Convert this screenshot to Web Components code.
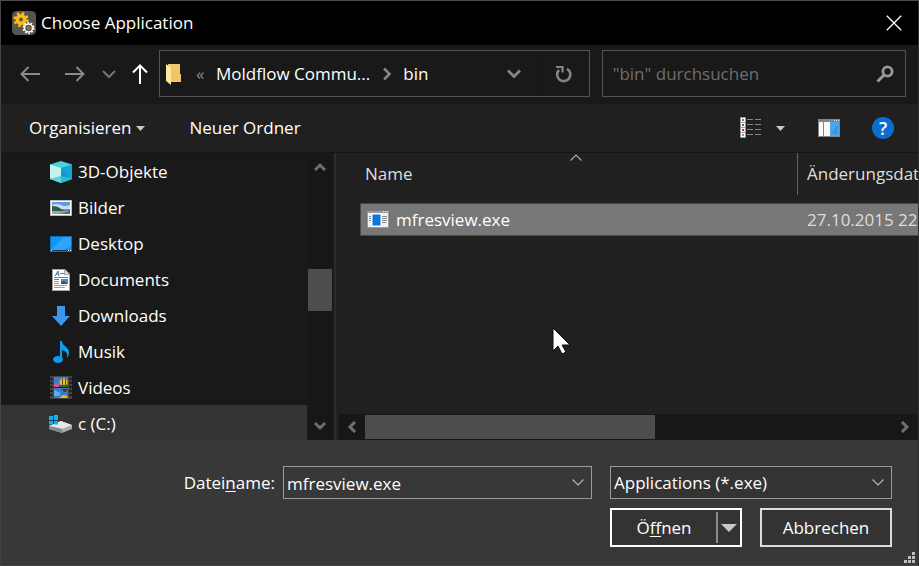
<!DOCTYPE html>
<html lang="de">
<head>
<meta charset="utf-8">
<title>Choose Application</title>
<style>
  html, body { height: 100%; }
  body { margin: 0; background: #383838; color: #fff; font: 17px/24px "Open Sans", "Noto Sans", sans-serif; overflow: hidden; }
</style>
</head>
<body>
<file-dialog></file-dialog>
<script>
const base = `
  *, *::before, *::after { box-sizing: border-box; }
  button, input, select { font: inherit; color: inherit; background: none; border: 0; border-radius: 0; padding: 0; margin: 0; }
  button { display: flex; align-items: center; justify-content: center; }
`;

const icons = {
  gears: [24, 24, `<rect width="24" height="24" rx="4.500" fill="#57534f"/>
    <g fill="none" stroke="#fdbc1b"><circle cx="9" cy="8.500" r="3.700" stroke-width="3.600"/><circle cx="9" cy="8.500" r="6.300" stroke-width="2.600" stroke-dasharray="2.500 2.448"/></g>
    <g fill="none" stroke="#fff"><circle cx="16.500" cy="17" r="4" stroke-width="1.500"/><circle cx="16.500" cy="17" r="5.200" stroke-width="1.600" stroke-dasharray="1.700 1.567"/></g><circle cx="16.500" cy="17" r="2" fill="#8f7433"/>`],
  close: [16, 16, `<path d="M.8.8 15.200 15.200M15.200.8.8 15.200" stroke="#fff" stroke-width="1.300" fill="none"/>`],
  back: [20, 16, `<path d="M20 8H1.500M8.500 1 1.500 8l7 7" stroke="#8b8b8b" stroke-width="1.900" fill="none"/>`],
  forward: [20, 16, `<path d="M0 8h18.500M11.500 1l7 7-7 7" stroke="#8b8b8b" stroke-width="1.900" fill="none"/>`],
  recent: [14, 10, `<path d="M1 2l6 6 6-6" stroke="#757575" stroke-width="2" fill="none"/>`],
  up: [16, 20, `<path d="M8 20V2M1 8.500l7-7 7 7" stroke="#fff" stroke-width="2" fill="none"/>`],
  folder: [16, 22, `<path d="M3 1h12v10h1v8H4z" fill="#f5cf69"/><path d="M6 1h9v10h1v8H6z" fill="#f0c765"/><path d="M1 1l5 4v17l-5-4z" fill="#ffe9a2"/>`],
  drop: [14, 10, `<path d="M1 1.500l6 6 6-6" stroke="#858585" stroke-width="2.800" fill="none"/>`],
  crumb: [10, 14, `<path d="M2 1.500L7.500 7 2 12.500" stroke="#858585" stroke-width="2.600" fill="none"/>`],
  refresh: [18, 18, `<path d="M12 3.800A6.600 6.600 0 1 1 4 5" stroke="#858585" stroke-width="2.600" fill="none"/><path d="M1 2h6.500v5.500" stroke="#858585" stroke-width="2.200" fill="none"/>`],
  search: [18, 18, `<circle cx="11.500" cy="6.500" r="4.600" stroke="#9a9a9a" stroke-width="2.800" fill="none"/><path d="M8 10l-6.500 6.500" stroke="#9a9a9a" stroke-width="3" fill="none"/>`],
  caret: [9, 5, `<path d="M0 0h9L4.500 5z" fill="#c8c8c8"/>`],
  bigcaret: [16, 8, `<path d="M0 0h16L8 8z" fill="#c8c8c8"/>`],
  view: [22, 22, `<path d="M0 0h6v21H0z" fill="#999"/><path d="M1 1h4v4H1zM1 6h4v4H1zM1 11h4v4H1zM1 16h4v4H1z" fill="#fff"/><path d="M2 2h2v2H2z" fill="#3a83c6"/><path d="M2 7h2v2H2z" fill="#5e7a2d"/><path d="M2 12h2v2H2z" fill="#c22b1c"/><path d="M2 17h2v2H2z" fill="#8795a8"/><path d="M7 2.500h6M15 2.500h6M7 7.500h6M15 7.500h6M7 12.500h6M15 12.500h6M7 17.500h6M15 17.500h6" stroke="#858585"/>`],
  pane: [22, 18, `<path d="M0 0h22v18H0z" fill="#858585"/><path d="M1 3h4v14H1zM6 3h6v14H6z" fill="#fafafa"/><path d="M12 3h9v14h-9z" fill="#4ba6ef"/><path d="M13 15l7-10v10z" fill="#3b94de"/><path d="M16 1h1v1h-1zM18 1h1v1h-1zM20 1h1v1h-1z" fill="#ddd"/>`],
  cube: [22, 22, `<path d="M0 3.500L11 0l11 3.500V18l-11 4L0 18z" fill="#4ed0dd"/><path d="M0 3.500L11 7v8L0 18z" fill="#c3f2f1"/><path d="M11 7l11-3.500V18l-11-3z" fill="#12a5d6"/><path d="M11 7l7 10-7-2z" fill="#1996c0"/><path d="M11 15l11 3-11 4z" fill="#27bddd"/><path d="M11 15L0 18l11 4z" fill="#60d3dc"/>`],
  pictures: [22, 16, `<path d="M0 0h22v16H0z" fill="#b9b9b9"/><path d="M1 1h20v14H1z" fill="#fff"/><path d="M2 2h18v12H2z" fill="#6597e8"/><path d="M2 5q6-2 9 0t9 0v4H2z" fill="#c6def4"/><path d="M2 6q6 0 9 3t9 1v1H2z" fill="#355c42"/><path d="M2 11h18v3H2z" fill="#83aeb4"/><path d="M9 14l11-3v3z" fill="#527b4e"/>`],
  desktop: [22, 16, `<path d="M0 0h22v16H0z" fill="#0a6db9"/><path d="M1 1h20v13H1z" fill="#1196f5"/><path d="M1 14L14 1h7v9l-7 4z" fill="#2ea4ff"/><path d="M1 14h20v1H1z" fill="#123c63"/><path d="M1 14h1v1H1zM18 14h1v1h-1zM20 14h1v1h-1z" fill="#fff"/>`],
  documents: [18, 22, `<path d="M0 0h13l5 5v17H0z" fill="#a3a3a3"/><path d="M1 1h11v5h5v15H1z" fill="#fff"/><path d="M13 1v4h4z" fill="#ddd"/><path d="M3 7L6 2l1 5M4 5h3" stroke="#2377b9" fill="none"/><path d="M8 4.500h4M2 8.500h14M2 10.500h5" stroke="#2f91d4"/><path d="M2 12.500h5M2 14.500h5M2 16.500h13M2 18.500h11" stroke="#9c9c9c"/><path d="M9 10h7v5H9z" fill="#568dc0"/><path d="M9 13l3-1 4 3H9z" fill="#2d5b4f"/>`],
  downloads: [20, 20, `<path d="M6 0h8v10h5L10 20 1 10h5z" fill="#3a97e8"/>`],
  music: [16, 22, `<ellipse cx="5" cy="18.500" rx="5" ry="3.500" fill="#0b9cf2"/><path d="M7 0h2c0 5 7 6 7 11 0 3-1 5-2 6 1-5-1-7-5-8v9H7z" fill="#0b9cf2"/>`],
  videos: [22, 23, `<path d="M0 0h22v23H0z" fill="#444"/><path d="M4 1h14v21H4z" fill="#3b79cf"/><path d="M4 8l3-1 3 2v2H4z" fill="#d2549b"/><ellipse cx="13.500" cy="6" rx="4" ry="3.500" fill="#edbd22"/><path d="M12 3h1v6h-1zM15 3h1v6h-1z" fill="#7c3d20"/><path d="M9 9h9v2H9z" fill="#35672c"/><path d="M4 11h14v1H4z" fill="#222"/><path d="M4 14l7 3-2 3H4z" fill="#6ba8e8"/><path d="M10 22q1-3 4-3t4 3z" fill="#edb71e"/><path d="M12 13h6l-2 3h-2z" fill="#5b3325"/><path d="M1.500 2v20M20.500 2v20" stroke="#151515" stroke-width="2" stroke-dasharray="2 2"/>`],
  drive: [23, 18, `<path d="M0 11l12-5 11 4v4l-10 4L0 14z" fill="#a9a9a9"/><path d="M0 11l12-5 11 4-10 4z" fill="#e7e7e7"/><path d="M0 11l13 3v4L0 14z" fill="#858585"/><path d="M2 13l4 1v1l-4-1z" fill="#46c65a"/><path d="M0 1h4v4H0zM5 0h4v5H5zM0 6h4v3.500H0zM5 6h4v3.500H5z" fill="#09b4f3"/>`],
  exe: [22, 17, `<path d="M0 0h22v17H0z" fill="#9a9a9a"/><path d="M1 2h20v14H1z" fill="#f1f1f1"/><path d="M5 3h9v12H5z" fill="#0a77dc" stroke="#fff"/><path d="M2 5.500h2M2 7.500h2M2 9.500h2M15 5.500h5M15 7.500h5M15 9.500h5M15 11.500h4" stroke="#8b8b8b"/><path d="M16 0h1v1h-1zM18 0h1v1h-1zM20 0h1v1h-1z" fill="#eee"/>`],
  sort: [12, 7, `<path d="M.5 6.500L6 1l5.500 5.500" stroke="#aaa" stroke-width="1.200" fill="none"/>`],
  thin: [12, 7, `<path d="M.5.5L6 6 11.500.5" stroke="#b5b5b5" stroke-width="1.200" fill="none"/>`],
  sup: [12, 10, `<path d="M1 8l5-5 5 5" stroke="#6f6f6f" stroke-width="3" fill="none"/>`],
  sdown: [12, 10, `<path d="M1 2l5 5 5-5" stroke="#6f6f6f" stroke-width="3" fill="none"/>`],
  sleft: [10, 12, `<path d="M8 1L3 6l5 5" stroke="#6f6f6f" stroke-width="3" fill="none"/>`],
  sright: [10, 12, `<path d="M2 1l5 5-5 5" stroke="#6f6f6f" stroke-width="3" fill="none"/>`],
  cursor: [19, 28, `<path d="M1 1v23l5-5 4 8 4-2-4-7h8z" fill="#fff" stroke="#0a0a14" stroke-width="1"/>`],
  grip: [12, 12, `<path d="M8 0h3v3H8zM4 4h3v3H4zM8 4h3v3H8zM0 8h3v3H0zM4 8h3v3H4zM8 8h3v3H8z" fill="#bdbdbd"/>`]
};

class Base extends HTMLElement {
  render(css, html) {
    const t = document.createElement('template');
    t.innerHTML = `<style>${base}${css}</style>${html}`;
    this.attachShadow({ mode: 'open' }).append(t.content.cloneNode(true));
  }
}

customElements.define('ui-icon', class extends Base {
  connectedCallback() {
    if (this.shadowRoot) return;
    const [w, h, body] = icons[this.getAttribute('name')];
    this.render(':host{display:inline-flex;flex:none}svg{display:block}',
      `<svg width="${w}" height="${h}" viewBox="0 0 ${w} ${h}" aria-hidden="true">${body}</svg>`);
  }
});

customElements.define('title-bar', class extends Base {
  constructor() {
    super();
    this.render(`
      :host { display: flex; align-items: center; gap: 5px; height: 44px; padding-left: 11px; background: #000; }
      h1 { flex: 1; margin: 0; font: inherit; }
      button { width: 48px; height: 44px; }
    `, `<ui-icon name="gears"></ui-icon><h1><slot></slot></h1><button aria-label="Schließen"><ui-icon name="close"></ui-icon></button>`);
  }
});

customElements.define('nav-bar', class extends Base {
  constructor() {
    super();
    this.render(`
      :host { display: flex; align-items: center; height: 59px; padding: 5px 12px 7px 6px; background: #191919; }
      nav { display: flex; }
      nav button { width: 45px; height: 47px; }
      nav .s { width: 24px; } nav .m { width: 38px; }
      .address, .search { display: flex; align-items: center; height: 47px; min-width: 0; border: 1px solid #535353; }
      .address { flex: 431 1 0; }
      .search { flex: 304 1 0; margin-left: 12px; }
      .address > ui-icon { margin-left: 5px; }
      ol { display: flex; align-items: center; flex: 1; list-style: none; margin: 0 0 0 15px; padding: 0; white-space: nowrap; }
      ol ui-icon { margin: 0 11px 0 12px; }
      .more { width: 9px; margin-right: 11px; color: #8b8b8b; }
      .drop { width: 49px; height: 45px; }
      .reload { width: 50px; height: 45px; border-left: 1px solid #151515; }
      input { flex: 1; min-width: 0; width: 0; padding: 0 0 0 10px; outline: 0; }
      input::placeholder { color: #6e6e6e; opacity: 1; }
      .find { width: 41px; height: 45px; }
      li { display: flex; align-items: center; }
    `, `<nav aria-label="Verlauf"><button aria-label="Zurück"><ui-icon name="back"></ui-icon></button><button aria-label="Vorwärts"><ui-icon name="forward"></ui-icon></button><button class="s" aria-label="Zuletzt besucht"><ui-icon name="recent"></ui-icon></button><button class="m" aria-label="Nach oben"><ui-icon name="up"></ui-icon></button></nav>
      <div class="address"><ui-icon name="folder"></ui-icon>
        <ol><li class="more">«</li><li><button>Moldflow Commu...</button></li><li><ui-icon name="crumb"></ui-icon></li><li><button>bin</button></li></ol>
        <button class="drop" aria-label="Vorherige Orte"><ui-icon name="drop"></ui-icon></button>
        <button class="reload" aria-label="Aktualisieren"><ui-icon name="refresh"></ui-icon></button></div>
      <div class="search"><input type="text" aria-label="Suchen" placeholder='"bin" durchsuchen'><button class="find" aria-label="Suche starten"><ui-icon name="search"></ui-icon></button></div>`);
  }
});

customElements.define('tool-bar', class extends Base {
  constructor() {
    super();
    this.render(`
      :host { display: flex; align-items: center; height: 49px; padding: 0 24px 0 28px; background: #202020; border-bottom: 1px solid #161616; }
      button { height: 44px; }
      .org { gap: 5px; margin-right: 44px; }
      .new { margin-right: auto; }
      .view { gap: 14px; margin-right: 33px; }
      .pane { margin-right: 32px; }
      .help { width: 22px; height: 22px; border-radius: 50%; background: #0b6fd1; font-size: 18px; font-weight: 600; line-height: 22px; }
    `, `<button class="org">Organisieren <ui-icon name="caret"></ui-icon></button><button class="new">Neuer Ordner</button>
      <button class="view" aria-label="Ansicht ändern"><ui-icon name="view"></ui-icon><ui-icon name="caret"></ui-icon></button>
      <button class="pane" aria-label="Vorschaufenster"><ui-icon name="pane"></ui-icon></button><button class="help" aria-label="Hilfe">?</button>`);
  }
});

customElements.define('tree-item', class extends Base {
  constructor() {
    super();
    this.render(`
      :host { display: block; }
      :host([selected]) { background: #333; }
      a { display: flex; align-items: center; gap: 6px; height: 36px; padding: 1px 0 0 48px; color: inherit; text-decoration: none; }
      .i { display: flex; justify-content: center; width: 23px; }
    `, `<a href="#"><span class="i"><slot name="icon"></slot></span><slot></slot></a>`);
  }
});

customElements.define('scroll-bar', class extends Base {
  constructor() {
    super();
    this.render(`
      :host { display: flex; flex-direction: column; background: #171717; width: 26px; padding: 0 1px; }
      :host([horizontal]) { flex-direction: row; width: auto; height: 26px; padding: 1px 0; }
      button { width: 24px; height: 28px; flex: none; }
      :host([horizontal]) button { width: 26px; height: 24px; }
      .track { display: flex; flex-direction: inherit; flex: 1; }
      .before { flex: var(--before) 1 0; } .thumb { flex: var(--size) 1 0; background: #4d4d4d; } .after { flex: var(--after) 1 0; }
    `, `<button class="a" aria-label="Zurück scrollen"><slot name="start"></slot></button><div class="track"><div class="before"></div><div class="thumb"></div><div class="after"></div></div><button class="b" aria-label="Weiter scrollen"><slot name="end"></slot></button>`);
  }
});

customElements.define('file-list', class extends Base {
  constructor() {
    super();
    this.render(`
      :host { display: block; min-width: 0; min-height: 0; overflow: hidden; padding-left: 23px; background: #202020; }
      table { table-layout: fixed; width: 680px; border-collapse: separate; border-spacing: 0; text-align: left; }
      th, td { padding: 0; font-weight: 400; white-space: nowrap; }
      th { height: 42px; color: #dedede; }
      th button { position: relative; width: 100%; height: 42px; padding-left: 5px; justify-content: flex-start; border-right: 1px solid #636363; }
      th + th button { padding-left: 9px; }
      .sort { display: flex; justify-content: center; position: absolute; top: 1px; left: 0; right: 6px; }
      tbody::before { content: ""; display: block; height: 8px; }
      td { height: 33px; background: #777; border: 1px solid #484848; border-width: 1px 0; color: #dedede; }
      td:first-child { border-left-width: 1px; color: #fff; }
      td + td { padding-left: 9px; }
      .f { display: flex; align-items: center; gap: 7px; padding-left: 6px; }
      col.n { width: 438px; }
    `, `<table><colgroup><col class="n"><col></colgroup><thead><tr><th><button>Name<span class="sort"><ui-icon name="sort"></ui-icon></span></button></th><th><button>Änderungsdatum</button></th></tr></thead>
      <tbody><tr><td><span class="f"><ui-icon name="exe"></ui-icon>mfresview.exe</span></td><td>27.10.2015 22:14</td></tr></tbody></table>`);
  }
});

customElements.define('dialog-footer', class extends Base {
  constructor() {
    super();
    this.render(`
      :host { display: grid; grid-template-columns: 274px minmax(0, 1fr) 282px; gap: 9px 0; padding: 26px 26px 18px 0; background: #383838; }
      label { text-align: right; align-self: center; }
      u { text-underline-offset: 2px; text-decoration-thickness: 1px; }
      .box { display: flex; align-items: center; height: 33px; border: 1px solid #9b9b9b; }
      .name { margin: 0 18px 0 8px; }
      input { flex: 1; min-width: 0; width: 0; height: 31px; padding: 2px 0 0 3px; outline: 0; }
      .name button { width: 26px; height: 31px; }
      .type { display: grid; grid-template-columns: 1fr 26px; background: #333; }
      select { grid-area: 1 / 1 / 2 / 3; height: 31px; padding: 0 0 0 3px; appearance: none; outline: 0; }
      .type ui-icon { grid-area: 1 / 2; justify-self: center; pointer-events: none; }
      .acts { grid-column: 3; display: grid; grid-template-columns: 1fr 1fr; gap: 18px; }
      .open, .cancel { height: 39px; background: #333; }
      .open { display: flex; align-items: center; border: 2px solid #fff; }
      .open .go { flex: 1; height: 35px; }
      .open .more { width: 24px; height: 31px; border-left: 2px solid #8b8b8b; }
      .cancel { border: 2px solid #dcdcdc; }
    `, `<label for="n">Datei<u>n</u>ame:</label>
      <div class="box name"><input id="n" type="text" value="mfresview.exe" spellcheck="false"><button aria-label="Zuletzt verwendete Dateien"><ui-icon name="thin"></ui-icon></button></div>
      <div class="box type"><select aria-label="Dateityp"><option>Applications (*.exe)</option></select><ui-icon name="thin"></ui-icon></div>
      <div class="acts"><div class="open"><button class="go"><span>Ö<u>f</u>fnen</span></button><button class="more" aria-label="Weitere Optionen"><ui-icon name="bigcaret"></ui-icon></button></div><button class="cancel">Abbrechen</button></div>`);
  }
});

customElements.define('file-dialog', class extends Base {
  constructor() {
    super();
    const places = [['cube', '3D-Objekte'], ['pictures', 'Bilder'], ['desktop', 'Desktop'], ['documents', 'Documents'], ['downloads', 'Downloads'], ['music', 'Musik'], ['videos', 'Videos'], ['drive', 'c (C:)']];
    this.render(`
      :host { box-sizing: border-box; position: relative; display: flex; flex-direction: column; height: 100vh; border: 1px solid #434343; border-top-color: #4f4f4f; border-right-color: #303030; background: #383838; }
      title-bar, nav-bar, tool-bar, dialog-footer { flex: none; }
      .body { display: grid; grid-template-columns: 306px 26px 4px minmax(0, 1fr); flex: 1; min-height: 0; }
      .tree { background: #191919; overflow: hidden; }
      .vbar { --before: 88; --size: 42; --after: 101; }
      .split { background: #2b2b2b; border-left: 1px solid #1b1b1b; border-right: 1px solid #242424; }
      .files { display: grid; grid-template-rows: minmax(0, 1fr) 26px; background: #202020; min-width: 0; min-height: 0; }
      .hbar { margin-left: 2px; --before: 0; --size: 289; --after: 237; }
      .pointer { position: absolute; left: 551px; top: 326px; pointer-events: none; }
      .grip { position: absolute; right: 2px; bottom: 1px; }
    `, `<title-bar>Choose Application</title-bar><nav-bar></nav-bar><tool-bar></tool-bar>
      <div class="body"><nav class="tree" aria-label="Orte">${places.map(([i, t], n) => `<tree-item ${n === 7 ? 'selected' : ''}><ui-icon slot="icon" name="${i}"></ui-icon>${t}</tree-item>`).join('')}</nav>
      <scroll-bar class="vbar"><ui-icon slot="start" name="sup"></ui-icon><ui-icon slot="end" name="sdown"></ui-icon></scroll-bar><div class="split"></div>
      <div class="files"><file-list></file-list><scroll-bar horizontal class="hbar"><ui-icon slot="start" name="sleft"></ui-icon><ui-icon slot="end" name="sright"></ui-icon></scroll-bar></div></div>
      <dialog-footer></dialog-footer><ui-icon class="pointer" name="cursor"></ui-icon><ui-icon class="grip" name="grip"></ui-icon>`);
  }
});
</script>
</body>
</html>
